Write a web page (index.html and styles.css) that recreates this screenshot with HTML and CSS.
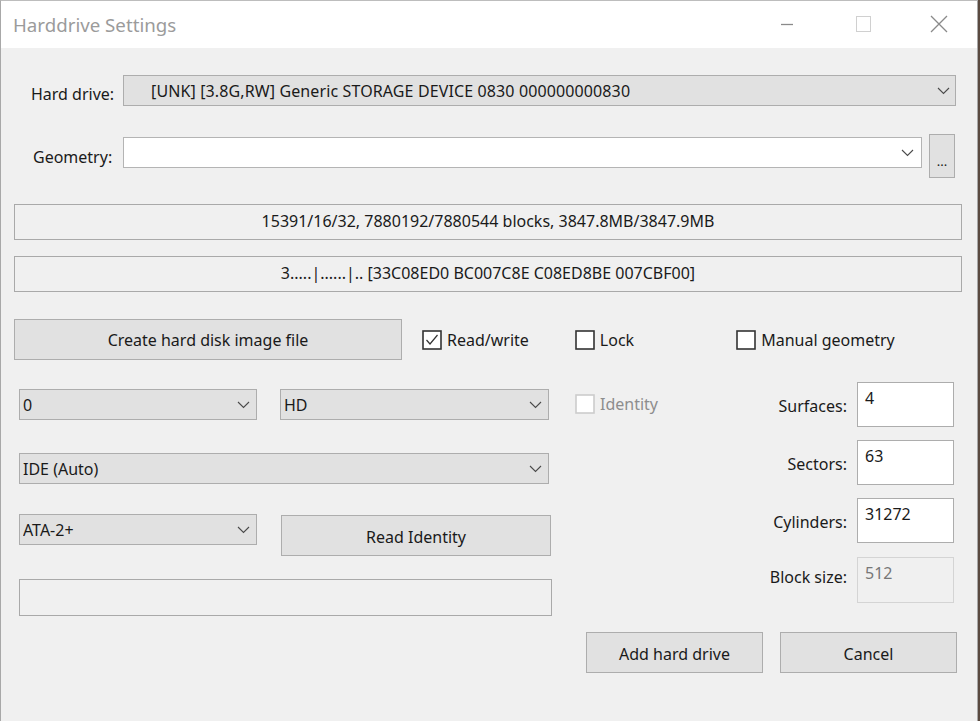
FILE: index.html
```html
<!DOCTYPE html>
<html>
<head>
<meta charset="utf-8">
<link rel="stylesheet" href="styles.css">
</head>
<body>
<div class="window">
  <div class="titlebar">
    <span class="title">Harddrive Settings</span>
    <div class="caption-btns">
      <svg class="cap cap-min" width="46" height="30" viewBox="0 0 46 30"><line x1="17" y1="15.5" x2="29" y2="15.5" stroke="#8a8a8a" stroke-width="1.3"/></svg>
      <svg class="cap cap-max" width="46" height="30" viewBox="0 0 46 30"><rect x="16.5" y="7.5" width="14" height="15" fill="none" stroke="#d0d0d0" stroke-width="1"/></svg>
      <svg class="cap cap-close" width="46" height="30" viewBox="0 0 46 30"><path d="M15 7 L31 23 M31 7 L15 23" stroke="#8a8a8a" stroke-width="1.3" fill="none"/></svg>
    </div>
  </div>
  <div class="content">
    <div class="row row-drive">
      <span class="lbl lbl-drive">Hard drive:</span>
      <div class="combo combo-drive">
        <span class="combo-text drive-text">[UNK] [3.8G,RW] Generic STORAGE DEVICE 0830 000000000830</span>
        <svg class="chev" width="13" height="8" viewBox="0 0 13 8"><path d="M1 1 L6.5 6.5 L12 1" fill="none" stroke="#4a4a4a" stroke-width="1.1"/></svg>
      </div>
    </div>
    <div class="row row-geo">
      <span class="lbl lbl-geo">Geometry:</span>
      <div class="combo combo-geo">
        <span class="combo-text"></span>
        <svg class="chev" width="13" height="8" viewBox="0 0 13 8"><path d="M1 1 L6.5 6.5 L12 1" fill="none" stroke="#4a4a4a" stroke-width="1.1"/></svg>
      </div>
      <div class="btn btn-dots">...</div>
    </div>
    <div class="infobox info1">15391/16/32, 7880192/7880544 blocks, 3847.8MB/3847.9MB</div>
    <div class="infobox info2">3.....|......|.. [33C08ED0 BC007C8E C08ED8BE 007CBF00]</div>

    <div class="row row-create">
      <div class="btn btn-create">Create hard disk image file</div>
      <label class="chk chk-rw">
        <svg class="box" width="20" height="20" viewBox="0 0 20 20"><rect x="1" y="1" width="18" height="18" fill="#fff" stroke="#333" stroke-width="1.6"/><path d="M4.5 10 L8 14 L15.5 5" fill="none" stroke="#333" stroke-width="1.2"/></svg>
        <span>Read/write</span>
      </label>
      <label class="chk chk-lock">
        <svg class="box" width="20" height="20" viewBox="0 0 20 20"><rect x="1" y="1" width="18" height="18" fill="#fff" stroke="#333" stroke-width="1.6"/></svg>
        <span>Lock</span>
      </label>
      <label class="chk chk-manual">
        <svg class="box" width="20" height="20" viewBox="0 0 20 20"><rect x="1" y="1" width="18" height="18" fill="#fff" stroke="#333" stroke-width="1.6"/></svg>
        <span>Manual geometry</span>
      </label>
    </div>

    <div class="lower">
      <div class="leftcol">
        <div class="pair pair-top">
          <div class="combo combo-small"><span class="combo-text">0</span><svg class="chev" width="13" height="8" viewBox="0 0 13 8"><path d="M1 1 L6.5 6.5 L12 1" fill="none" stroke="#4a4a4a" stroke-width="1.1"/></svg></div>
          <div class="combo combo-hd"><span class="combo-text">HD</span><svg class="chev" width="13" height="8" viewBox="0 0 13 8"><path d="M1 1 L6.5 6.5 L12 1" fill="none" stroke="#4a4a4a" stroke-width="1.1"/></svg></div>
        </div>
        <div class="combo combo-ide"><span class="combo-text">IDE (Auto)</span><svg class="chev" width="13" height="8" viewBox="0 0 13 8"><path d="M1 1 L6.5 6.5 L12 1" fill="none" stroke="#4a4a4a" stroke-width="1.1"/></svg></div>
        <div class="pair pair-ata">
          <div class="combo combo-small"><span class="combo-text">ATA-2+</span><svg class="chev" width="13" height="8" viewBox="0 0 13 8"><path d="M1 1 L6.5 6.5 L12 1" fill="none" stroke="#4a4a4a" stroke-width="1.1"/></svg></div>
          <div class="btn btn-readid">Read Identity</div>
        </div>
        <div class="emptybox"></div>
      </div>
      <div class="midcol">
        <label class="chk chk-identity disabled">
          <svg class="box" width="20" height="20" viewBox="0 0 20 20"><rect x="1" y="1" width="18" height="18" fill="#fff" stroke="#cccccc" stroke-width="1.6"/></svg>
          <span>Identity</span>
        </label>
      </div>
      <div class="geogrid">
        <span class="glbl">Surfaces:</span><div class="field">4</div>
        <span class="glbl">Sectors:</span><div class="field">63</div>
        <span class="glbl">Cylinders:</span><div class="field">31272</div>
        <span class="glbl glbl-bs">Block size:</span><div class="field field-disabled">512</div>
      </div>
    </div>

    <div class="row row-actions">
      <div class="btn btn-action">Add hard drive</div>
      <div class="btn btn-action">Cancel</div>
    </div>
  </div>
</div>
</body>
</html>
```
FILE: styles.css
```css
html, body {
  margin: 0;
  padding: 0;
}
body {
  background: #5a4a40;
  width: 980px;
  height: 721px;
  overflow: hidden;
  font-family: "Noto Sans", "Open Sans", sans-serif;
  font-size: 16px;
  color: #1a1a1a;
}
.window {
  box-sizing: border-box;
  width: 978px;
  height: 721px;
  background: #f0f0f0;
  border-left: 1px solid #a8a8a8;
  border-right: 1px solid #a8a8a8;
  border-top: 1px solid #bdbdbd;
  display: flex;
  flex-direction: column;
}
.titlebar {
  height: 47px;
  background: #ffffff;
  display: flex;
  align-items: center;
  flex-shrink: 0;
}
.title {
  margin-left: 12px;
  margin-top: -1px;
  font-size: 18.7px;
  color: #9b9b9b;
}
.caption-btns {
  margin-left: auto;
  margin-right: 15px;
  display: flex;
  gap: 30px;
  margin-top: -1px;
}
.cap { display: block; }

.content {
  display: flex;
  flex-direction: column;
}
.row {
  display: flex;
}
.lbl {
  line-height: 20px;
}
.row-drive {
  margin-top: 27px;
  align-items: center;
}
.lbl-drive {
  width: 92px;
  margin-left: 30px;
  padding-top: 7px;
}
.combo {
  box-sizing: border-box;
  height: 31px;
  border: 1px solid #adadad;
  background: #e1e1e1;
  display: flex;
  align-items: center;
  padding-left: 3px;
  padding-right: 6px;
}
.combo-text {
  flex: 1;
  white-space: nowrap;
  overflow: hidden;
}
.drive-text {
  letter-spacing: 0.12px;
  padding-top: 1px;
}
.chev {
  display: block;
  flex-shrink: 0;
}
.combo-drive {
  width: 833px;
  padding-left: 27px;
  padding-right: 5px;
}
.row-geo {
  margin-top: 28px;
  align-items: flex-start;
}
.lbl-geo {
  width: 90px;
  margin-left: 32px;
  padding-top: 13px;
}
.combo-geo {
  width: 799px;
  margin-top: 3px;
  background: #ffffff;
  border-color: #b4b4b4;
  padding-right: 7px;
}
.btn {
  box-sizing: border-box;
  background: #e1e1e1;
  border: 1px solid #adadad;
  display: flex;
  align-items: center;
  justify-content: center;
  white-space: nowrap;
}
.btn-dots {
  width: 26px;
  height: 44px;
  margin-left: 7px;
  padding-top: 9px;
  font-size: 13px;
}
.infobox {
  box-sizing: border-box;
  width: 948px;
  height: 36px;
  margin-left: 13px;
  border: 1px solid #a9a9a9;
  display: flex;
  align-items: center;
  justify-content: center;
  white-space: nowrap;
  padding-bottom: 2px;
}
.info1 { margin-top: 26px; }
.info2 { margin-top: 16px; }

.row-create {
  margin-top: 27px;
  align-items: center;
  height: 41px;
}
.btn-create {
  width: 388px;
  height: 41px;
  margin-left: 13px;
}
.chk {
  display: flex;
  align-items: center;
  gap: 5px;
}
.chk span { padding-top: 1px; }
.chk .box { display: block; flex-shrink: 0; }
.chk-rw { margin-left: 20px; }
.chk-lock { margin-left: 46px; }
.chk-manual { margin-left: 102px; }
.chk.disabled { color: #8d8d8d; }

.lower {
  display: flex;
  margin-top: 22px;
}
.leftcol {
  width: 533px;
  margin-left: 18px;
  padding-top: 7px;
  display: flex;
  flex-direction: column;
}
.pair {
  display: flex;
  align-items: flex-start;
}
.combo-small { width: 238px; }
.combo-hd { width: 269px; margin-left: 23px; }
.combo-ide { width: 530px; margin-top: 33px; }
.pair-ata { margin-top: 30px; }
.btn-readid {
  width: 270px;
  height: 41px;
  margin-left: 24px;
  margin-top: 1px;
  padding-top: 2px;
}
.emptybox {
  box-sizing: border-box;
  width: 533px;
  height: 37px;
  margin-top: 23px;
  border: 1px solid #a9a9a9;
  background: #f0f0f0;
}
.midcol {
  margin-left: 23px;
  padding-top: 10px;
  flex: 1;
}
.geogrid {
  display: grid;
  grid-template-columns: auto 97px;
  column-gap: 10px;
  row-gap: 13px;
  margin-right: 23px;
  align-items: center;
  justify-items: end;
  align-content: start;
}
.glbl {
  padding-top: 2px;
}
.glbl-bs { padding-top: 0; margin-top: -6px; }
.field {
  box-sizing: border-box;
  width: 97px;
  height: 45px;
  background: #ffffff;
  border: 1px solid #adadad;
  padding: 3px 7px;
  justify-self: start;
  line-height: 24px;
}
.field-disabled {
  background: #f0f0f0;
  border-color: #d4d4d4;
  color: #777777;
  height: 46px;
  margin-top: 1px;
}
.row-actions {
  justify-content: flex-end;
  gap: 17px;
  margin-top: 16px;
  margin-right: 20px;
}
.btn-action {
  width: 177px;
  height: 41px;
  padding-top: 2px;
}
```
